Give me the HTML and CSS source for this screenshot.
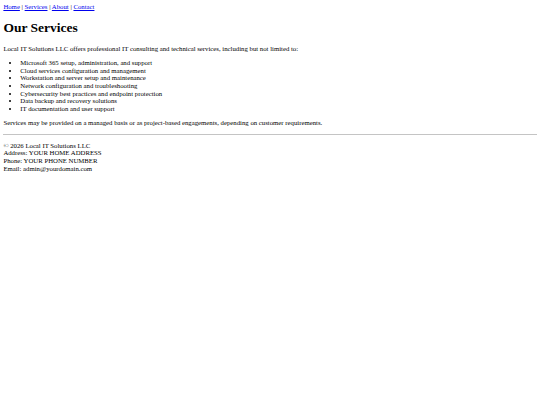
FILE: index.html
```html
<!DOCTYPE html>
<html>
<head>
<meta charset="utf-8">
<title>Our Services</title>
<link rel="stylesheet" href="styles.css">
</head>
<body>
<nav class="nav"><a href="#">Home</a> | <a href="#">Services</a> | <a href="#">About</a> | <a href="#">Contact</a></nav>
<h1 class="title">Our Services</h1>
<p class="text">Local IT Solutions LLC offers professional IT consulting and technical services, including but not limited to:</p>
<ul class="list">
<li>Microsoft 365 setup, administration, and support</li>
<li>Cloud services configuration and management</li>
<li>Workstation and server setup and maintenance</li>
<li>Network configuration and troubleshooting</li>
<li>Cybersecurity best practices and endpoint protection</li>
<li>Data backup and recovery solutions</li>
<li>IT documentation and user support</li>
</ul>
<p class="text">Services may be provided on a managed basis or as project-based engagements, depending on customer requirements.</p>
<hr class="rule">
<footer class="footer">
<p class="text">© 2026 Local IT Solutions LLC<br>Address: YOUR HOME ADDRESS<br>Phone: YOUR PHONE NUMBER<br>Email: admin@yourdomain.com</p>
</footer>
</body>
</html>
```

FILE: styles.css
```css
body {
  margin: 3.375px;
  font-family: "Liberation Serif", serif;
  font-size: 6.75px;
  line-height: 7.67px;
  color: #000;
  background: #fff;
}
a { color: #0000ee; }
.title {
  font-size: 13.5px;
  line-height: 15.4px;
  margin: 9.05px 0;
}
.text { margin: 6.75px 0; }
.list {
  margin: 6.75px 0;
  padding-left: 16.9px;
}
.rule {
  margin: 3.375px 0;
  height: 0;
  border: 0;
  border-top: 1px solid #c4c4c4;
}
```
